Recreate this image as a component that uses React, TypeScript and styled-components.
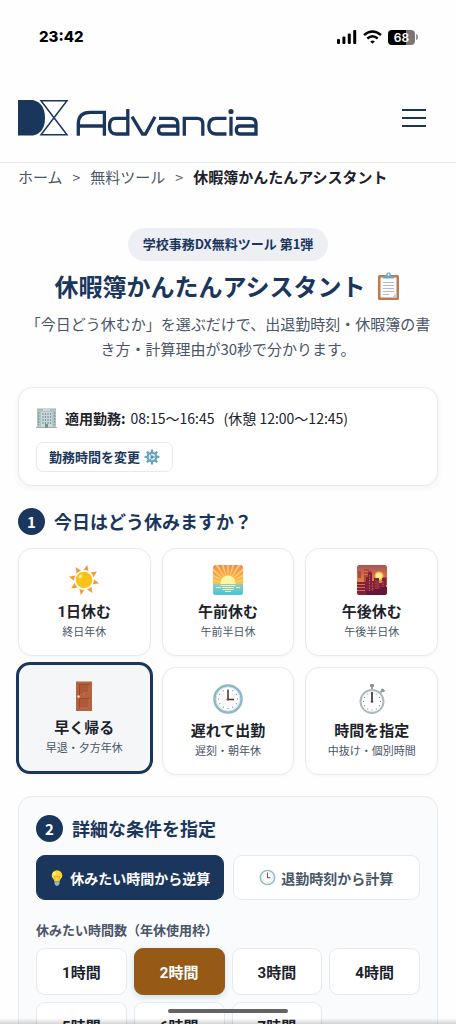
import React, { useState } from "react";
import styled, { createGlobalStyle } from "styled-components";

const navy = "#1b365d";
const ink = "#1c222b";
const muted = "#4a5568";
const line = "#e7eaef";
const jp = `"Noto Sans CJK JP", sans-serif`;
const ui = `Roboto, "Noto Sans CJK JP", sans-serif`;

const GlobalStyle = createGlobalStyle`
  *, *::before, *::after { box-sizing: border-box; }
  html { scrollbar-width: none; }
  body { margin: 0; background: #fefefe; color: ${ink}; font-family: ${jp}; }
  h1, h2, p, ol { margin: 0; padding: 0; }
  button { font: inherit; color: inherit; cursor: pointer; margin: 0; }
  svg { display: block; flex: none; }
`;

const Screen = styled.div`
  height: 100vh;
  overflow-y: auto;
  scrollbar-width: none;
`;

const StatusBar = styled.div`
  display: flex;
  align-items: center;
  justify-content: space-between;
  height: 74px;
  padding: 0 38px 0 39px;
`;

const Clock = styled.span`
  font: 800 15px/20px Inter, sans-serif;
  color: #000;
`;

const StatusIcons = styled.div`
  display: flex;
  align-items: center;
  gap: 6px;
`;

const Header = styled.header`
  display: flex;
  align-items: center;
  justify-content: space-between;
  height: 89px;
  padding: 0 26px 0 18px;
  border-bottom: 1px solid ${line};
`;

const LogoLink = styled.a`
  display: block;
`;

const MenuButton = styled.button`
  padding: 8px 4px;
  border: 0;
  background: none;
`;

const Breadcrumb = styled.nav`
  padding: 2px 18px 0;
  font-size: 15px;
  line-height: 24px;
  color: ${muted};

  ol {
    display: flex;
    gap: 10px;
    list-style: none;
  }
  a {
    color: inherit;
    text-decoration: none;
  }
  strong {
    color: ${ink};
  }
`;

const Separator = styled.li`
  font-size: 14px;
`;

const Main = styled.main`
  padding: 39px 18px 60px;
`;

const Hero = styled.section`
  display: flex;
  flex-direction: column;
  align-items: center;
  text-align: center;
`;

const Badge = styled.span`
  padding: 6px 15px 7px;
  border-radius: 17px;
  background: #edeff4;
  color: ${navy};
  font-size: 13px;
  font-weight: 700;
  line-height: 20px;
`;

const Title = styled.h1`
  display: flex;
  align-items: center;
  gap: 9px;
  margin-top: 7px;
  color: ${navy};
  font-size: 24px;
  line-height: 36px;
`;

const Lead = styled.p`
  padding: 0 4px;
  margin-top: 7px;
  color: ${muted};
  font-size: 15px;
  line-height: 25px;
`;

const Card = styled.section`
  margin-top: 26px;
  padding: 16px 17px 13px;
  border: 1px solid ${line};
  border-radius: 14px;
  background: #fff;
  box-shadow: 0 2px 6px rgba(27, 54, 93, 0.05);
`;

const WorkHours = styled.p`
  display: flex;
  align-items: center;
  gap: 8px;
  font-size: 14px;
  line-height: 28px;
`;

const Hours = styled.span`
  margin-left: 5px;
`;

const BreakTime = styled.span`
  margin-left: 9px;
`;

const OutlineButton = styled.button`
  display: flex;
  align-items: center;
  gap: 4px;
  margin-top: 10px;
  padding: 4px 12px;
  border: 1px solid ${line};
  border-radius: 7px;
  background: #fff;
  color: ${navy};
  font-size: 13px;
  font-weight: 700;
  line-height: 20px;
`;

const StepTitle = styled.h2`
  display: flex;
  align-items: center;
  gap: 9px;
  color: ${navy};
  font-size: 18px;
  line-height: 27px;
`;

const StepNumber = styled.span`
  width: 27px;
  height: 27px;
  border-radius: 50%;
  background: ${navy};
  color: #fff;
  font-size: 15px;
  line-height: 27px;
  text-align: center;
`;

const LeaveSection = styled.section`
  margin-top: 22px;
`;

const LeaveGrid = styled.div`
  display: grid;
  grid-template-columns: repeat(3, 1fr);
  gap: 11px;
  margin-top: 13px;
`;

const LeaveButton = styled.button<{ $active: boolean }>`
  display: flex;
  flex-direction: column;
  align-items: center;
  height: 108px;
  padding: 15px 4px 0;
  border: 1px solid ${line};
  border-radius: 14px;
  background: #fff;
  box-shadow: 0 1px 3px rgba(27, 54, 93, 0.04);
  ${({ $active }) =>
    $active &&
    `
    height: 112px;
    margin: -5px -2px 0;
    border: 3px solid ${navy};
    background: #f4f6f8;
  `}
`;

const LeaveName = styled.span`
  margin-top: 5px;
  font-family: ${ui};
  font-size: 15px;
  font-weight: 700;
  line-height: 22px;
`;

const LeaveNote = styled.span`
  color: ${muted};
  font-size: 11px;
  line-height: 16px;
`;

const Panel = styled.section`
  margin-top: 21px;
  padding: 18px 17px 24px;
  border: 1px solid ${line};
  border-radius: 14px;
  background: #fafbfd;
`;

const ModeRow = styled.div`
  display: grid;
  grid-template-columns: 1fr 1fr;
  gap: 9px;
  margin-top: 13px;
`;

const ModeButton = styled.button<{ $active: boolean }>`
  display: flex;
  align-items: center;
  justify-content: center;
  gap: 5px;
  height: 45px;
  padding: 0;
  border: 1px solid ${({ $active }) => ($active ? navy : line)};
  border-radius: 9px;
  background: ${({ $active }) => ($active ? navy : "#fff")};
  color: ${({ $active }) => ($active ? "#fff" : muted)};
  font-size: 14px;
  font-weight: 700;
  white-space: nowrap;
`;

const FieldLabel = styled.p`
  margin-top: 20px;
  color: ${muted};
  font-size: 13px;
  font-weight: 700;
  line-height: 20px;
`;

const HourGrid = styled.div`
  display: grid;
  grid-template-columns: repeat(4, 1fr);
  gap: 7px;
  margin-top: 8px;
`;

const HourButton = styled.button<{ $active: boolean }>`
  height: 47px;
  padding: 0;
  border: 1px solid ${({ $active }) => ($active ? "#965a16" : line)};
  border-radius: 9px;
  background: ${({ $active }) => ($active ? "#965a16" : "#fff")};
  color: ${({ $active }) => ($active ? "#fff" : ink)};
  box-shadow: ${({ $active }) => ($active ? "0 2px 6px rgba(20, 130, 140, 0.22)" : "none")};
  font-family: ${ui};
  font-size: 15px;
  font-weight: 700;
`;

const BottomShade = styled.div`
  position: fixed;
  inset: auto 0 0;
  height: 6px;
  background: linear-gradient(transparent, rgba(0, 0, 0, 0.16));
  pointer-events: none;
`;

const HomeIndicator = styled.div`
  position: fixed;
  bottom: 11px;
  left: 50%;
  width: 120px;
  height: 4px;
  margin-left: -60px;
  border-radius: 2px;
  background: #646464;
`;

const Logo = () => (
  <svg width="241" height="38" viewBox="0 0 241 38" role="img" aria-label="DX Advancia">
    <path d="M0 1H15Q27 4 27 19T15 36.500H0Z" fill={navy} />
    <path d="M23 1.700H49L23 35.800H49Z" fill="none" stroke={navy} strokeWidth="1.500" />
    <g fill="none" stroke={navy} strokeWidth="3.300">
      <path d="M60.300 36.700V25Q60.300 13.300 72 13.300H86.400V36.700M60.300 27H86.400" />
      <path d="M109.800 10V35H98Q91.500 35 91.500 27T98 19.300H109.800" />
      <path d="M114 17.700L124.500 35H127.500L137 17.700" />
      <path d="M141 19.300H154Q159.800 19.300 159.800 25V35H144Q140.500 35 140.500 31T144 27H159.800" />
      <path d="M166.300 36.700V19.300H179Q184.800 19.300 184.800 25V36.700" />
      <path d="M208.500 19.300H198Q190.800 19.300 190.800 27T198 35H208.500M213 17.700V36.700" />
      <path d="M218 19.300H232Q238 19.300 238 25V35H222Q218.300 35 218.300 31T222 27H238" />
    </g>
    <circle cx="213" cy="12.500" r="2.600" fill={navy} />
  </svg>
);

const Signal = () => (
  <svg width="20" height="14" viewBox="0 0 20 14" aria-hidden="true">
    <rect x="0" y="9" width="3" height="5" rx="1" />
    <rect x="5.400" y="6.500" width="3" height="7.500" rx="1" />
    <rect x="10.800" y="3.500" width="3" height="10.500" rx="1" />
    <rect x="16.200" y="0" width="3" height="14" rx="1" />
  </svg>
);

const Wifi = () => (
  <svg width="19" height="14" viewBox="0 0 19 14" aria-hidden="true">
    <path d="M1 5Q9.500-2.200 18 5M4.300 8.500Q9.500 4 14.700 8.500" fill="none" stroke="#000" strokeWidth="2.400" />
    <path d="M9.500 13.800L7.200 11.500Q9.500 9.500 11.800 11.500Z" />
  </svg>
);

const BatteryShell = styled.span`
  display: flex;
  align-items: center;
  gap: 1px;

  b {
    width: 27px;
    height: 15px;
    border-radius: 4px;
    background: linear-gradient(90deg, #000 68%, #777 68%);
    color: #fff;
    font: 600 12px/15px Inter, sans-serif;
    text-align: center;
  }
  i {
    width: 2px;
    height: 6px;
    border-radius: 0 2px 2px 0;
    background: #999;
  }
`;

const Clipboard = () => (
  <svg width="27" height="28" viewBox="0 0 27 28" aria-hidden="true">
    <rect x="3" y="3" width="21" height="25" rx="1.500" fill="#bf7a4b" />
    <path d="M5.500 5.500H21.500V25.500H5.500Z" fill="#fafcfd" />
    <path d="M21.500 21V25.500H17Z" fill="#c5ced6" />
    <path d="M8 10.500H19M8 13.500H19M8 16.500H19M8 19.500H19M8 22.500H14" stroke="#b4bdc5" />
    <path d="M8 6.500V4H11Q11 .5 13.500.5T16 4H19V6.500Z" fill="#6ba7c0" />
    <circle cx="13.500" cy="2.700" r="1" fill="#fff" />
  </svg>
);

const Building = () => (
  <svg width="21" height="20" viewBox="0 0 21 20" aria-hidden="true">
    <path d="M1 1H7V19H1ZM14 1H20V19H14Z" fill="#b3c4c6" />
    <path d="M5 3H16V20H5Z" fill="#ccd7d6" />
    <path d="M2.500 4V17M18.500 4V17" stroke="#7ba0ab" strokeWidth="1.300" strokeDasharray="2 1" />
    <path d="M7 5V16M9.500 5V16M12 5V16M14.500 5V16" stroke="#72a0ad" strokeWidth="1.200" strokeDasharray="2 1" />
    <path d="M1 1H20M5 3H16M0 19.500H21" stroke="#9eafb0" />
    <path d="M9 16H12V20H9Z" fill="#7b9094" />
  </svg>
);

const Gear = () => (
  <svg width="16" height="16" viewBox="0 0 16 16" aria-hidden="true">
    {[0, 45, 90, 135, 180, 225, 270, 315].map((angle) => (
      <path key={angle} d="M6.600 3.500L7 .6H9L9.400 3.500Z" fill="#6aa3bc" transform={`rotate(${angle} 8 8)`} />
    ))}
    <circle cx="8" cy="8" r="4.300" fill="#dbe8ed" stroke="#6aa3bc" strokeWidth="2" />
    <path d="M8 8H12.300M8 8L5.800 4.300M8 8L5.800 11.700" stroke="#6aa3bc" />
    <circle cx="8" cy="8" r="1.500" fill="#5790aa" />
  </svg>
);

const Sun = () => (
  <svg width="32" height="32" viewBox="0 0 32 32" aria-hidden="true">
    {[12, 57, 102, 147, 192, 237, 282, 327].map((angle) => (
      <path key={angle} d="M16 .6L18.700 6.600Q16 5.400 13.300 6.600Z" fill="#f29b34" transform={`rotate(${angle} 16 16)`} />
    ))}
    <circle cx="16" cy="16" r="8.300" fill="#fcc21b" />
    <ellipse cx="12.500" cy="12.500" rx="2.200" ry="1.400" fill="#fff07a" transform="rotate(-45 12.500 12.500)" />
  </svg>
);

const Sunrise = () => (
  <svg width="32" height="32" viewBox="0 0 32 32" aria-hidden="true">
    <defs>
      <linearGradient id="dawn" x2="0" y2="1">
        <stop stopColor="#f5845c" />
        <stop offset="1" stopColor="#fcc64d" />
      </linearGradient>
      <linearGradient id="sea" x2="0" y2="1">
        <stop stopColor="#93cdb9" />
        <stop offset="1" stopColor="#3fc3e0" />
      </linearGradient>
      <clipPath id="tile">
        <rect x="1" y="1" width="30" height="30" rx="2.500" />
      </clipPath>
    </defs>
    <g clipPath="url(#tile)">
      <path d="M0 0H32V21H0Z" fill="url(#dawn)" />
      {[-80, -64, -48, -32, -16, 0, 16, 32, 48, 64, 80].map((angle) => (
        <path key={angle} d="M16 19L14.900-4H17.100Z" fill="#fdd565" transform={`rotate(${angle} 16 19)`} />
      ))}
      <circle cx="16" cy="19" r="7.500" fill="#fff5a5" />
      <path d="M0 20H32V32H0Z" fill="url(#sea)" />
      <path d="M8.500 21H23.500V22H8.500ZM4 23H9V24H4ZM10 23H22V24H10ZM24 23H28V24H24ZM10.500 25H21.500V26H10.500ZM13 27H19V28H13Z" fill="#f5f3bc" />
    </g>
  </svg>
);

const City = () => (
  <svg width="32" height="32" viewBox="0 0 32 32" aria-hidden="true">
    <defs>
      <linearGradient id="dusk" x2="0" y2="1">
        <stop stopColor="#a75058" />
        <stop offset=".65" stopColor="#f18b35" />
      </linearGradient>
      <clipPath id="cityTile">
        <rect x="1" y="1" width="30" height="30" rx="2.500" />
      </clipPath>
    </defs>
    <g clipPath="url(#cityTile)">
      <path d="M0 0H32V32H0Z" fill="url(#dusk)" />
      <circle cx="23" cy="12" r="4.500" fill="#f9b440" />
      <circle cx="23" cy="12" r="3.200" fill="#ffec95" />
      <path d="M2 7H5V14H2ZM8 5H13V20H8ZM27 13H31V21H27Z" fill="#ad4845" />
      <path d="M0 18H10V13H12V9L14 7L16 9V17H18V14H23V19H26V14H30V32H0Z" fill="#82203f" />
      <path d="M1 20.500H9M1 23.500H9M1 26.500H9M8 7.500H12M8 10.500H12" stroke="#e27a43" strokeWidth=".9" />
      <path d="M13.500 11V29M16.500 19V27M20 16V25M22 17V25M27 17V24" stroke="#db6b45" strokeWidth=".8" strokeDasharray="1.500 1" />
      <path d="M10 27H18V25H25V23H31V31H10Z" fill="#65153a" />
    </g>
  </svg>
);

const Door = () => (
  <svg width="32" height="32" viewBox="0 0 32 32" aria-hidden="true">
    <path d="M8 1.500H24V31H8Z" fill="#b5623f" />
    <path d="M11.500 4.500H21V13.500H15V15.500H11.500ZM11.500 18.500H21V28H11.500Z" fill="#ad5939" stroke="#96492f" />
    <path d="M12 15H15.500V13H21V5M12 28H21V19" fill="none" stroke="#cc7755" />
    <circle cx="10.500" cy="16.500" r="1.300" fill="#f5e3d6" />
  </svg>
);

const ticks = [0, 30, 60, 90, 120, 150, 180, 210, 240, 270, 300, 330];

const ClockFace = ({ size = 32 }: { size?: number }) => (
  <svg width={size} height={size} viewBox="0 0 32 32" aria-hidden="true">
    <circle cx="16" cy="16" r="13.500" fill="#fdfdfd" stroke="#8cb8c7" strokeWidth="2.600" />
    <circle cx="16" cy="16" r="12" fill="none" stroke="#c5dce3" strokeWidth=".8" />
    {ticks.map((angle) => (
      <path key={angle} d="M16 6V7" stroke="#7d898e" transform={`rotate(${angle} 16 16)`} />
    ))}
    <path d="M16 7V16.500H22" fill="none" stroke="#443238" strokeWidth="1.500" />
    <circle cx="16" cy="16.200" r="1.300" fill="#9b3538" />
  </svg>
);

const Stopwatch = () => (
  <svg width="32" height="32" viewBox="0 0 32 32" aria-hidden="true">
    <path d="M16 3V6M24.500 9.500L27 7" stroke="#98a3a7" strokeWidth="2" />
    <rect x="14" y="1" width="4" height="3" rx="1" fill="#86939a" />
    <path d="M25.500 6L28.500 8.500" stroke="#86939a" strokeWidth="2.200" />
    <circle cx="16" cy="18.500" r="11.500" fill="#fcfcfc" stroke="#adb9bc" strokeWidth="2" />
    {ticks.map((angle) => (
      <path key={angle} d="M16 9.500V10.500" stroke="#7d898e" transform={`rotate(${angle} 16 18.500)`} />
    ))}
    <path d="M16 9V19" stroke="#39343a" strokeWidth="1.700" />
    <circle cx="16" cy="18.500" r="1.300" fill="#7d3439" />
  </svg>
);

const Bulb = () => (
  <svg width="16" height="16" viewBox="0 0 16 16" aria-hidden="true">
    <path d="M2.700 5.500A5.300 5.300 0 0 1 13.300 5.500C13.300 8 11 9 10.600 11.500H5.400C5 9 2.700 8 2.700 5.500Z" fill="#fdd835" />
    <path d="M6 11L5.500 6L7 7L8 6L9 7L10.500 6L10 11" fill="none" stroke="#f0a52a" strokeWidth=".8" />
    <ellipse cx="5.500" cy="3.700" rx="1.200" ry="1.800" fill="#fff7a8" />
    <path d="M5.500 11.500H10.500V14L9 15.700H7L5.500 14Z" fill="#9ab4bf" />
  </svg>
);

const leaveOptions = [
  { name: "1日休む", note: "終日年休", Icon: Sun },
  { name: "午前休む", note: "午前半日休", Icon: Sunrise },
  { name: "午後休む", note: "午後半日休", Icon: City },
  { name: "早く帰る", note: "早退・夕方年休", Icon: Door },
  { name: "遅れて出勤", note: "遅刻・朝年休", Icon: ClockFace },
  { name: "時間を指定", note: "中抜け・個別時間", Icon: Stopwatch },
];

export default function App() {
  const [leave, setLeave] = useState("早く帰る");
  const [mode, setMode] = useState<"duration" | "clock">("duration");
  const [hours, setHours] = useState(2);

  return (
    <>
      <GlobalStyle />
      <Screen>
        <StatusBar>
          <Clock>23:42</Clock>
          <StatusIcons>
            <Signal />
            <Wifi />
            <BatteryShell>
              <b>68</b>
              <i />
            </BatteryShell>
          </StatusIcons>
        </StatusBar>
        <Header>
          <LogoLink href="#">
            <Logo />
          </LogoLink>
          <MenuButton type="button" aria-label="メニュー">
            <svg width="24" height="20" viewBox="0 0 24 20" aria-hidden="true">
              <path d="M0 2H24M0 10H24M0 18H24" stroke={navy} strokeWidth="2" />
            </svg>
          </MenuButton>
        </Header>
        <Breadcrumb aria-label="パンくずリスト">
          <ol>
            <li><a href="#">ホーム</a></li>
            <Separator>&gt;</Separator>
            <li><a href="#">無料ツール</a></li>
            <Separator>&gt;</Separator>
            <li><strong>休暇簿かんたんアシスタント</strong></li>
          </ol>
        </Breadcrumb>
        <Main>
          <Hero>
            <Badge>学校事務DX無料ツール 第1弾</Badge>
            <Title>
              休暇簿かんたんアシスタント
              <Clipboard />
            </Title>
            <Lead>「今日どう休むか」を選ぶだけで、出退勤時刻・休暇簿の書き方・計算理由が30秒で分かります。</Lead>
          </Hero>

          <Card>
            <WorkHours>
              <Building />
              <span>
                <strong>適用勤務:</strong>
                <Hours>08:15〜16:45</Hours>
                <BreakTime>(休憩 12:00〜12:45)</BreakTime>
              </span>
            </WorkHours>
            <OutlineButton type="button">
              勤務時間を変更
              <Gear />
            </OutlineButton>
          </Card>

          <LeaveSection>
            <StepTitle>
              <StepNumber>1</StepNumber>
              今日はどう休みますか？
            </StepTitle>
            <LeaveGrid>
              {leaveOptions.map(({ name, note, Icon }) => (
                <LeaveButton
                  key={name}
                  type="button"
                  $active={leave === name}
                  aria-pressed={leave === name}
                  onClick={() => setLeave(name)}
                >
                  <Icon />
                  <LeaveName>{name}</LeaveName>
                  <LeaveNote>{note}</LeaveNote>
                </LeaveButton>
              ))}
            </LeaveGrid>
          </LeaveSection>

          <Panel>
            <StepTitle>
              <StepNumber>2</StepNumber>
              詳細な条件を指定
            </StepTitle>
            <ModeRow>
              <ModeButton type="button" $active={mode === "duration"} onClick={() => setMode("duration")}>
                <Bulb />
                休みたい時間から逆算
              </ModeButton>
              <ModeButton type="button" $active={mode === "clock"} onClick={() => setMode("clock")}>
                <ClockFace size={17} />
                退勤時刻から計算
              </ModeButton>
            </ModeRow>
            <FieldLabel id="hours-label">休みたい時間数（年休使用枠）</FieldLabel>
            <HourGrid role="group" aria-labelledby="hours-label">
              {[1, 2, 3, 4, 5, 6, 7].map((value) => (
                <HourButton
                  key={value}
                  type="button"
                  $active={hours === value}
                  aria-pressed={hours === value}
                  onClick={() => setHours(value)}
                >
                  {value}時間
                </HourButton>
              ))}
            </HourGrid>
          </Panel>
        </Main>
      </Screen>
      <BottomShade />
      <HomeIndicator />
    </>
  );
}
